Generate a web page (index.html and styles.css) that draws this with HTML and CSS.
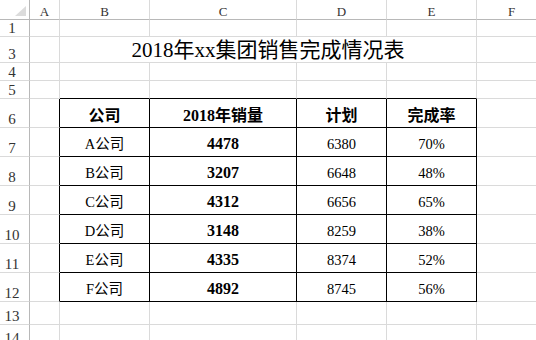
FILE: index.html
```html
<!DOCTYPE html>
<html lang="zh-CN">
<head>
    <meta charset="UTF-8">
    <title>2018年xx集团销售完成情况表</title>
    <link rel="stylesheet" href="styles.css">
</head>
<body>
    <div class="sheet">
        <!-- column headers -->
        <div class="corner"><span class="tri"></span></div>
        <div class="ch">A</div>
        <div class="ch">B</div>
        <div class="ch">C</div>
        <div class="ch">D</div>
        <div class="ch">E</div>
        <div class="ch">F</div>

        <!-- row 1 (row 2 is hidden) -->
        <div class="rh">1</div>
        <div></div><div></div><div></div><div></div><div></div><div></div>

        <!-- row 3: merged title B3:E3 -->
        <div class="rh">3</div>
        <div></div>
        <div class="title">2018年xx集团销售完成情况表</div>
        <div></div>

        <div class="rh">4</div>
        <div></div><div></div><div></div><div></div><div></div><div></div>

        <div class="rh">5</div>
        <div></div>
        <div class="edge-b"></div><div class="edge-b"></div><div class="edge-b"></div><div class="edge-b"></div>
        <div></div>

        <!-- table -->
        <div class="rh">6</div>
        <div class="edge-r"></div>
        <div class="t th">公司</div>
        <div class="t th">2018年销量</div>
        <div class="t th">计划</div>
        <div class="t th">完成率</div>
        <div></div>

        <div class="rh">7</div>
        <div class="edge-r"></div>
        <div class="t">A公司</div>
        <div class="t num">4478</div>
        <div class="t">6380</div>
        <div class="t">70%</div>
        <div></div>

        <div class="rh">8</div>
        <div class="edge-r"></div>
        <div class="t">B公司</div>
        <div class="t num">3207</div>
        <div class="t">6648</div>
        <div class="t">48%</div>
        <div></div>

        <div class="rh">9</div>
        <div class="edge-r"></div>
        <div class="t">C公司</div>
        <div class="t num">4312</div>
        <div class="t">6656</div>
        <div class="t">65%</div>
        <div></div>

        <div class="rh">10</div>
        <div class="edge-r"></div>
        <div class="t">D公司</div>
        <div class="t num">3148</div>
        <div class="t">8259</div>
        <div class="t">38%</div>
        <div></div>

        <div class="rh">11</div>
        <div class="edge-r"></div>
        <div class="t">E公司</div>
        <div class="t num">4335</div>
        <div class="t">8374</div>
        <div class="t">52%</div>
        <div></div>

        <div class="rh">12</div>
        <div class="edge-r"></div>
        <div class="t">F公司</div>
        <div class="t num">4892</div>
        <div class="t">8745</div>
        <div class="t">56%</div>
        <div></div>

        <div class="rh">13</div>
        <div></div><div></div><div></div><div></div><div></div><div></div>

        <div class="rh">14</div>
        <div></div><div></div><div></div><div></div><div></div><div></div>
    </div>
</body>
</html>
```

FILE: styles.css
```css
html, body {
    margin: 0;
    padding: 0;
}

body {
    width: 536px;
    height: 340px;
    overflow: hidden;
    background: #fff;
    color: #000;
    font-family: "Liberation Serif", "Noto Sans CJK SC", serif;
}

.sheet {
    display: grid;
    grid-template-columns: 30px 30px 90px 147px 90px 90px 70px;
    grid-template-rows: 20px 17px 26px 18px 18px repeat(7, 29px) 23px 22px;
}

/* every cell draws its own right and bottom gridline */
.sheet > div {
    box-sizing: border-box;
    border-right: 1px solid #dadada;
    border-bottom: 1px solid #dadada;
    display: flex;
    align-items: center;
    justify-content: center;
    line-height: 1;
}

.sheet > .corner {
    border-right-color: #b8b8b8;
    border-bottom-color: #b8b8b8;
    align-items: flex-end;
    justify-content: flex-end;
    padding: 0 3px 3px 0;
}

.tri {
    width: 11px;
    height: 10px;
    background: #dcdcdc;
    clip-path: polygon(100% 0, 100% 100%, 0 100%);
}

/* column letters */
.sheet > .ch {
    border-bottom-color: #b8b8b8;
    align-items: flex-end;
    padding-bottom: 1px;
    font-size: 13px;
    line-height: 13px;
    color: #333;
}

/* row numbers */
.sheet > .rh {
    border-right-color: #b8b8b8;
    align-items: flex-end;
    padding-right: 5px;
    font-size: 15px;
    line-height: 15px;
    color: #333;
}

.sheet > .title {
    grid-column: span 4;
    font-size: 21px;
    padding-top: 2px;
}

/* table borders */
.sheet > .edge-b {
    border-bottom-color: #000;
}

.sheet > .edge-r {
    border-right-color: #000;
}

.sheet > .t {
    border-right-color: #000;
    border-bottom-color: #000;
    font-size: 14.5px;
    padding-top: 4px;
}

.sheet > .th {
    font-size: 16px;
    font-weight: bold;
    padding-top: 5px;
}

.sheet > .num {
    font-size: 16px;
    font-weight: bold;
}
```
